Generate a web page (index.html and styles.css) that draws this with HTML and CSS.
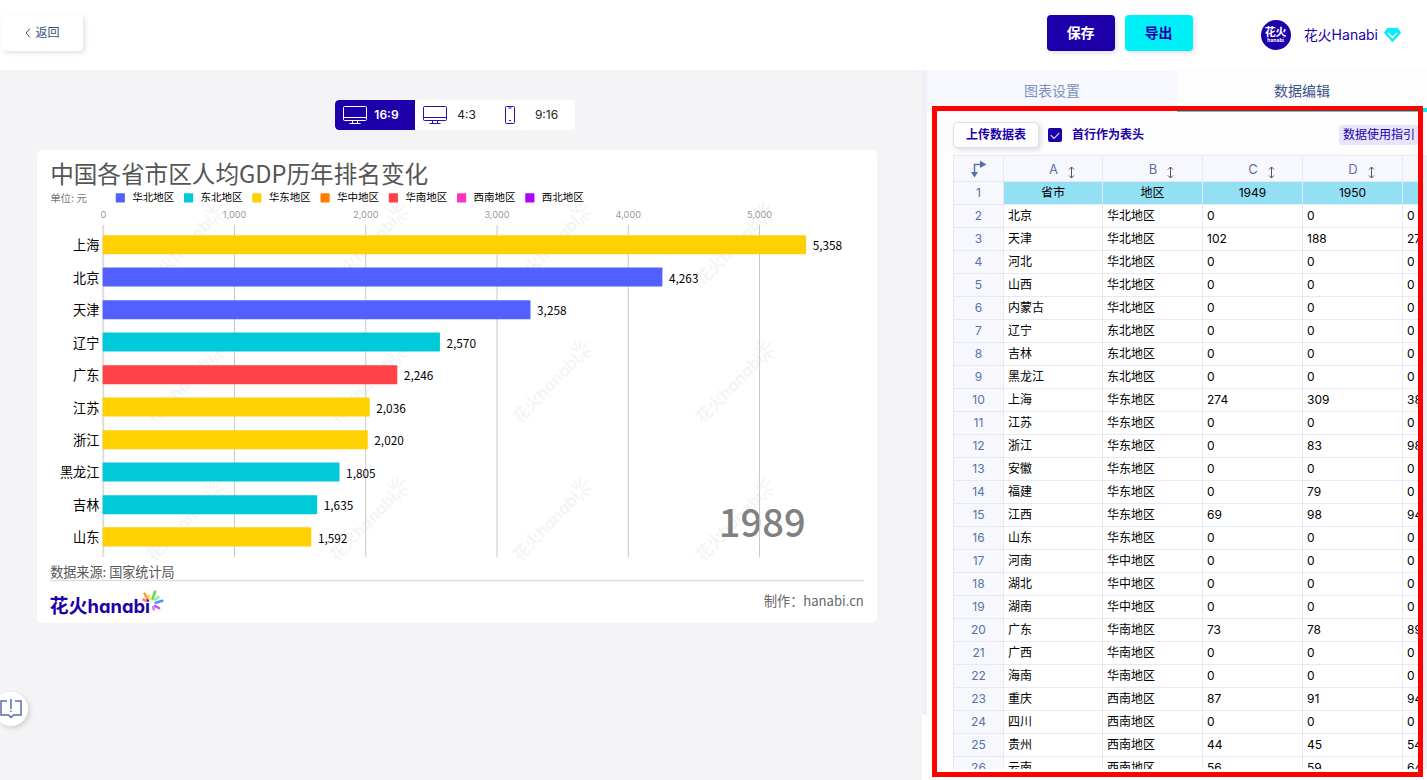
FILE: index.html
```html
<!DOCTYPE html>
<html lang="zh-CN">
<head>
<meta charset="utf-8">
<meta name="viewport" content="width=device-width, initial-scale=1">
<title>花火Hanabi</title>
<link rel="stylesheet" href="styles.css">
</head>
<body>
<header class="topbar">
  <button class="back" type="button"><svg width="6" height="10" viewBox="0 0 6 10" fill="none" stroke="currentColor"><path d="M5 .5 1 5l4 4.500"/></svg>返回</button>
  <div class="actions">
    <button class="btn save" type="button">保存</button>
    <button class="btn export" type="button">导出</button>
  </div>
  <a class="user" href="#user">
    <span class="avatar"><b>花火</b><i>hanabi</i></span>
    <span>花火Hanabi</span>
    <svg class="gem" width="17" height="14" viewBox="0 0 17 14"><path fill="#00f0fa" d="M4 0h9q.7 0 1.200.6l2.500 3.400q.5.7 0 1.300l-7.200 8q-1 1-2 0l-7.200-8q-.5-.6 0-1.300L2.800.6Q3.300 0 4 0z"/><path d="m4.500 5.500 4 4 4-4" fill="none" stroke="#fff" stroke-width="1.600" stroke-linecap="round"/></svg>
  </a>
</header>
<div class="workspace">
  <main class="stage">
    <div class="ratios">
      <button class="ratio active" type="button"><svg width="24" height="18" viewBox="0 0 24 18"><path d="M1.500.5h21a1 1 0 0 1 1 1v12a1 1 0 0 1-1 1h-21a1 1 0 0 1-1-1v-12a1 1 0 0 1 1-1zM1 11.500h22M9.500 15v2M14.500 15v2M6.500 17.500h11"/></svg><span>16:9</span></button>
      <button class="ratio" type="button"><svg width="24" height="18" viewBox="0 0 24 18"><path d="M1.500.5h21a1 1 0 0 1 1 1v12a1 1 0 0 1-1 1h-21a1 1 0 0 1-1-1v-12a1 1 0 0 1 1-1zM1 11.500h22M9.500 15v2M14.500 15v2M6.500 17.500h11"/></svg><span>4:3</span></button>
      <button class="ratio" type="button"><svg width="24" height="18" viewBox="0 0 24 18"><path d="M3.500.5h7a1 1 0 0 1 1 1v15a1 1 0 0 1-1 1h-7a1 1 0 0 1-1-1v-15a1 1 0 0 1 1-1zM5.500 2h3M6 14.500h2"/></svg><span>9:16</span></button>
    </div>
    <section class="card">
      <svg class="chart" viewBox="0 0 1280 720" role="img" aria-label="中国各省市区人均GDP历年排名变化">
        <defs>
          <g id="mark" class="mark">
            <text transform="rotate(-46)"><tspan>花火</tspan><tspan class="latin">hanabi</tspan></text>
            <path d="M87-112l-9-5M88-114l-4-11M91-115l1-13M94-113l8-11M96-109l12-3M96-106l9 4M93-104l4 9"/>
          </g>
        </defs>
        <g>
          <use href="#mark" x="178" y="208"/><use href="#mark" x="457" y="208"/><use href="#mark" x="736" y="208"/><use href="#mark" x="1015" y="208"/>
          <use href="#mark" x="178" y="418"/><use href="#mark" x="457" y="418"/><use href="#mark" x="736" y="418"/><use href="#mark" x="1015" y="418"/>
          <use href="#mark" x="178" y="628"/><use href="#mark" x="457" y="628"/><use href="#mark" x="736" y="628"/><use href="#mark" x="1015" y="628"/>
        </g>
        <text class="title" x="20" y="50">中国各省市区人均GDP历年排名变化</text>
        <text class="unit" x="20" y="79">单位: 元</text>
        <g class="legend">
          <rect class="north" x="120" y="66" width="14" height="14" rx="1"/><text x="145" y="78">华北地区</text>
          <rect class="northeast" x="224" y="66" width="14" height="14" rx="1"/><text x="249" y="78">东北地区</text>
          <rect class="east" x="328" y="66" width="14" height="14" rx="1"/><text x="353" y="78">华东地区</text>
          <rect class="central" x="432" y="66" width="14" height="14" rx="1"/><text x="457" y="78">华中地区</text>
          <rect class="south" x="536" y="66" width="14" height="14" rx="1"/><text x="561" y="78">华南地区</text>
          <rect class="southwest" x="640" y="66" width="14" height="14" rx="1"/><text x="665" y="78">西南地区</text>
          <rect class="northwest" x="744" y="66" width="14" height="14" rx="1"/><text x="769" y="78">西北地区</text>
        </g>
        <text class="year" x="1039" y="590">1989</text>
        <g class="axis">
          <path class="zero" d="M101 114v506"/>
          <path d="M301 114v506M501 114v506M701 114v506M901 114v506M1101 114v506"/>
          <text x="101" y="104">0</text><text x="301" y="104">1,000</text><text x="501" y="104">2,000</text><text x="701" y="104">3,000</text><text x="901" y="104">4,000</text><text x="1101" y="104">5,000</text>
        </g>
        <g>
          <rect class="east" x="100" y="130" width="1072" height="29" rx="1"/>
          <rect class="north" x="100" y="179" width="853" height="29" rx="1"/>
          <rect class="north" x="100" y="229" width="652" height="29" rx="1"/>
          <rect class="northeast" x="100" y="278" width="514" height="29" rx="1"/>
          <rect class="south" x="100" y="328" width="449" height="29" rx="1"/>
          <rect class="east" x="100" y="377" width="407" height="29" rx="1"/>
          <rect class="east" x="100" y="427" width="404" height="29" rx="1"/>
          <rect class="northeast" x="100" y="476" width="361" height="29" rx="1"/>
          <rect class="northeast" x="100" y="526" width="327" height="29" rx="1"/>
          <rect class="east" x="100" y="575" width="318" height="29" rx="1"/>
        </g>
        <g class="names">
          <text x="95" y="152">上海</text><text x="95" y="202">北京</text><text x="95" y="251">天津</text><text x="95" y="301">辽宁</text><text x="95" y="350">广东</text><text x="95" y="400">江苏</text><text x="95" y="449">浙江</text><text x="95" y="499">黑龙江</text><text x="95" y="548">吉林</text><text x="95" y="598">山东</text>
        </g>
        <g class="values">
          <text x="1182" y="153">5,358</text><text x="963" y="203">4,263</text><text x="762" y="252">3,258</text><text x="624" y="302">2,570</text><text x="559" y="351">2,246</text><text x="517" y="401">2,036</text><text x="514" y="450">2,020</text><text x="471" y="500">1,805</text><text x="437" y="549">1,635</text><text x="428" y="599">1,592</text>
        </g>
        <text class="note" x="20" y="650">数据来源: 国家统计局</text>
        <path class="rule" d="M20 656h1240"/>
        <text class="logo" x="19" y="705">花火</text><text class="logo latin" x="77" y="706">hanabi</text>
        <g class="burst">
          <path stroke="#ff9a4a" d="M164 676l4 7"/><path stroke="#ffe14a" d="M171 679l1 5"/><path stroke="#5fdd4d" d="M176 684l4-11"/><path stroke="#8fe9b0" d="M180 685l5-4"/><path stroke="#4d94ff" d="M181 690l10-3"/><path stroke="#b35cf5" d="M180 695l6 3"/><path stroke="#d77cf7" d="M177 697l1 3"/><path stroke="#ff8080" d="M162 685l4 2"/>
        </g>
        <text class="note credit" x="1260" y="695">制作：hanabi.cn</text>
      </svg>
    </section>
  </main>
  <div class="track"></div>
  <aside class="panel">
    <nav class="tabs">
      <button class="tab" type="button">图表设置</button>
      <button class="tab current" type="button">数据编辑</button>
    </nav>
    <div class="tools">
      <button class="upload" type="button">上传数据表</button>
      <input class="tick" type="checkbox" id="first-row" checked>
      <label for="first-row">首行作为表头</label>
      <a class="guide" href="#guide">数据使用指引</a>
    </div>
    <div class="sheet-wrap">
      <table class="sheet">
        <colgroup><col class="col-index"><col class="col-first"><col><col><col><col></colgroup>
        <thead><tr>
          <th><svg class="corner" width="17" height="18" viewBox="0 0 17 18"><path d="M4.500 12V4.500H11" fill="none" stroke="currentColor" stroke-width="1.500"/><path d="M10 .5 16.500 4.500 10 8zM1 12h7l-3.500 5.500z" fill="currentColor"/></svg></th>
          <th><div>A<svg width="7" height="13" viewBox="0 0 7 13"><path d="M3.500 1v11M1 3.500l2.500-2.500L6 3.500M1 9.500 3.500 12 6 9.500"/></svg></div></th>
          <th><div>B<svg width="7" height="13" viewBox="0 0 7 13"><path d="M3.500 1v11M1 3.500l2.500-2.500L6 3.500M1 9.500 3.500 12 6 9.500"/></svg></div></th>
          <th><div>C<svg width="7" height="13" viewBox="0 0 7 13"><path d="M3.500 1v11M1 3.500l2.500-2.500L6 3.500M1 9.500 3.500 12 6 9.500"/></svg></div></th>
          <th><div>D<svg width="7" height="13" viewBox="0 0 7 13"><path d="M3.500 1v11M1 3.500l2.500-2.500L6 3.500M1 9.500 3.500 12 6 9.500"/></svg></div></th>
          <th></th>
        </tr></thead>
        <tbody>
          <tr class="head"><th>1</th><td>省市</td><td>地区</td><td>1949</td><td>1950</td><td></td></tr>
          <tr><th>2</th><td>北京</td><td>华北地区</td><td>0</td><td>0</td><td>0</td></tr>
          <tr><th>3</th><td>天津</td><td>华北地区</td><td>102</td><td>188</td><td>27</td></tr>
          <tr><th>4</th><td>河北</td><td>华北地区</td><td>0</td><td>0</td><td>0</td></tr>
          <tr><th>5</th><td>山西</td><td>华北地区</td><td>0</td><td>0</td><td>0</td></tr>
          <tr><th>6</th><td>内蒙古</td><td>华北地区</td><td>0</td><td>0</td><td>0</td></tr>
          <tr><th>7</th><td>辽宁</td><td>东北地区</td><td>0</td><td>0</td><td>0</td></tr>
          <tr><th>8</th><td>吉林</td><td>东北地区</td><td>0</td><td>0</td><td>0</td></tr>
          <tr><th>9</th><td>黑龙江</td><td>东北地区</td><td>0</td><td>0</td><td>0</td></tr>
          <tr><th>10</th><td>上海</td><td>华东地区</td><td>274</td><td>309</td><td>38</td></tr>
          <tr><th>11</th><td>江苏</td><td>华东地区</td><td>0</td><td>0</td><td>0</td></tr>
          <tr><th>12</th><td>浙江</td><td>华东地区</td><td>0</td><td>83</td><td>98</td></tr>
          <tr><th>13</th><td>安徽</td><td>华东地区</td><td>0</td><td>0</td><td>0</td></tr>
          <tr><th>14</th><td>福建</td><td>华东地区</td><td>0</td><td>79</td><td>0</td></tr>
          <tr><th>15</th><td>江西</td><td>华东地区</td><td>69</td><td>98</td><td>94</td></tr>
          <tr><th>16</th><td>山东</td><td>华东地区</td><td>0</td><td>0</td><td>0</td></tr>
          <tr><th>17</th><td>河南</td><td>华中地区</td><td>0</td><td>0</td><td>0</td></tr>
          <tr><th>18</th><td>湖北</td><td>华中地区</td><td>0</td><td>0</td><td>0</td></tr>
          <tr><th>19</th><td>湖南</td><td>华中地区</td><td>0</td><td>0</td><td>0</td></tr>
          <tr><th>20</th><td>广东</td><td>华南地区</td><td>73</td><td>78</td><td>89</td></tr>
          <tr><th>21</th><td>广西</td><td>华南地区</td><td>0</td><td>0</td><td>0</td></tr>
          <tr><th>22</th><td>海南</td><td>华南地区</td><td>0</td><td>0</td><td>0</td></tr>
          <tr><th>23</th><td>重庆</td><td>西南地区</td><td>87</td><td>91</td><td>94</td></tr>
          <tr><th>24</th><td>四川</td><td>西南地区</td><td>0</td><td>0</td><td>0</td></tr>
          <tr><th>25</th><td>贵州</td><td>西南地区</td><td>44</td><td>45</td><td>54</td></tr>
          <tr><th>26</th><td>云南</td><td>西南地区</td><td>56</td><td>59</td><td>64</td></tr>
        </tbody>
      </table>
    </div>
    <div class="highlight"></div>
  </aside>
</div>
<button class="help" type="button" aria-label="帮助"><svg width="22" height="20" viewBox="0 0 22 20" fill="none" stroke="currentColor" stroke-width="1.500"><path d="M7 2H1v14h7.500l2.500 2.500 2.500-2.500H21V2h-6M11 0v10M11 11.500V13"/></svg></button>
</body>
</html>
```
FILE: styles.css
```css
* { box-sizing: border-box; }
body {
  margin: 0;
  height: 100vh;
  display: flex;
  flex-direction: column;
  overflow: hidden;
  background: #fff;
  font: 12px/18px Inter, "Noto Sans CJK SC", sans-serif;
  color: #000;
}
button { border: 0; padding: 0; background: none; font: inherit; color: inherit; cursor: pointer; }
a { color: inherit; text-decoration: none; }
svg { flex: none; display: block; }

.topbar { display: flex; align-items: flex-start; height: 70px; flex: none; padding: 15px 26px 0 2px; }
.back {
  display: flex; align-items: center; justify-content: center; gap: 4px;
  width: 81px; height: 36px; border-radius: 4px; background: #fff;
  color: #3c4f80; box-shadow: 2px 2px 5px rgba(0, 0, 0, .12);
}
.actions { display: flex; gap: 10px; margin-left: auto; }
.btn { width: 68px; height: 36px; border-radius: 4px; font-size: 14px; font-weight: 700; box-shadow: 2px 2px 5px rgba(0, 0, 0, .12); }
.save { background: #1e00aa; color: #fff; }
.export { background: #00f0fa; color: #1e00aa; }
.user { display: flex; align-items: center; margin: 5px 0 0 68px; font-size: 14px; color: #1e00aa; }
.avatar {
  display: flex; flex-direction: column; align-items: center; justify-content: center;
  width: 30px; height: 30px; margin-right: 13px; border-radius: 50%;
  background: #1e00aa; color: #fff; font-size: 11px; line-height: 11px;
}
.avatar i { font: 700 5px/5px Inter, sans-serif; }
.gem { margin-left: 6px; }

.workspace { display: flex; flex: 1; min-height: 0; }
.stage { flex: 1; min-width: 0; background: #f4f4f7; padding: 30px 45px 0 37px; display: flex; flex-direction: column; gap: 20px; }
.ratios { display: flex; margin: 0 auto; border-radius: 4px; background: #fff; overflow: hidden; border-right: 0; }
.stage .ratios { margin-left: calc(50% - 122px); margin-right: auto; }
.ratio { display: flex; align-items: center; width: 80px; height: 30px; padding: 0 9px 0 8px; color: #222; }
.ratio svg { fill: none; stroke: #2a0fb0; }
.ratio span { flex: 1; text-align: center; }
.ratio.active { background: #1e00aa; color: #fff; border-radius: 4px 0 0 4px; font-weight: 600; }
.ratio.active svg { stroke: #fff; }
.card { background: #fff; border-radius: 5px; overflow: hidden; }

.chart { width: 100%; height: auto; font-family: "Noto Sans CJK SC", sans-serif; }
.north { fill: #5160ff; }
.northeast { fill: #00cada; }
.east { fill: #ffd103; }
.central { fill: #ff7d00; }
.south { fill: #ff4248; }
.southwest { fill: #ff33bb; }
.northwest { fill: #b100ff; }
.title { font-size: 36px; fill: #555; }
.unit { font-size: 16px; fill: #777; }
.legend text { font-size: 16px; }
.axis path { fill: none; stroke: #c8c8c8; stroke-width: 1px; vector-effect: non-scaling-stroke; }
.axis .zero { stroke: #ddd; stroke-width: 2px; }
.axis text { font: 14px Inter, sans-serif; fill: #999; text-anchor: middle; }
.names text { font-size: 20px; text-anchor: end; }
.values text { font-size: 18px; }
.year { font-size: 58px; font-weight: 500; fill: #808080; }
.note { font-size: 20px; fill: #555; }
.credit { text-anchor: end; fill: #666; }
.rule { stroke: #ddd; stroke-width: 2; }
.logo { font-size: 29px; font-weight: 700; fill: #1e00aa; }
.latin { font-family: Inter, sans-serif; font-feature-settings: "cv11"; }
.logo.latin { font-size: 28px; }
.burst { fill: none; stroke-width: 4; stroke-linecap: round; }
.mark { fill: #f5f5f5; font-size: 25px; font-weight: 700; }
.mark path { fill: none; stroke: #f5f5f5; stroke-width: 3; stroke-linecap: round; }

.track { width: 5px; height: 645px; flex: none; background: #efeff8; border-radius: 0 0 3px 3px; }
.panel { position: relative; display: flex; flex-direction: column; width: 500px; flex: none; padding-bottom: 11px; background: #fdfdfe; }
.tabs { display: flex; height: 42px; flex: none; font-size: 14px; }
.tab { flex: 1; background: #f7f8fe; color: #7c91bd; }
.tab.current { background: #fdfdfe; color: #3c5388; border-bottom: 4px solid #00f0fa; padding-top: 4px; }
.tools { display: flex; align-items: center; padding: 10px 8px 7px 26px; color: #1e00aa; }
.upload { width: 86px; height: 26px; border: 1px solid #dcdcea; border-radius: 4px; background: #fff; font-weight: 700; box-shadow: 2px 2px 5px rgba(0, 0, 0, .12); }
.tools label { font-weight: 700; }
.tick {
  appearance: none; width: 14px; height: 14px; margin: 0 10px 0 9px; border-radius: 2px;
  background: #1e00aa; display: grid; place-items: center;
}
.tick:checked::before { content: ""; width: 7px; height: 4px; border: solid #fff; border-width: 0 0 1px 1px; transform: rotate(-45deg); margin-bottom: 2px; }
.guide { margin-left: auto; padding: 1px 4px; border-radius: 4px; background: #e6e5fa; }
.sheet-wrap { flex: 1; min-height: 0; margin-left: 26px; overflow: hidden; border-right: 5px solid #efeff8; }
.sheet { width: 549px; table-layout: fixed; border-collapse: collapse; background: #fff; }
.sheet col { width: 100px; }
.sheet .col-index { width: 50px; }
.sheet .col-first { width: 99px; }
.sheet th, .sheet td { height: 23px; padding: 0 4px; border: 1px solid #e6e8f2; line-height: 18px; }
.sheet th { background: #f7f8fe; color: #5a70a8; font-weight: 400; }
.sheet thead th { height: 26px; }
.sheet thead div { display: flex; justify-content: center; align-items: flex-start; gap: 10px; padding-left: 18px; font-size: 13px; }
.sheet thead div svg { margin-top: 6px; margin-bottom: -1px; fill: none; stroke: #555; }
.corner { margin: 0 auto; }
.head td { background: #93dff3; text-align: center; }
.highlight { position: absolute; inset: 36px 4px 3px 5px; border: 5px solid #f00; pointer-events: none; }

.help {
  position: fixed; left: -6px; bottom: 54px; display: grid; place-items: center;
  width: 34px; height: 34px; border-radius: 50%; background: #fff; color: #5a70a8;
  box-shadow: 2px 2px 5px rgba(0, 0, 0, .15);
}
```
